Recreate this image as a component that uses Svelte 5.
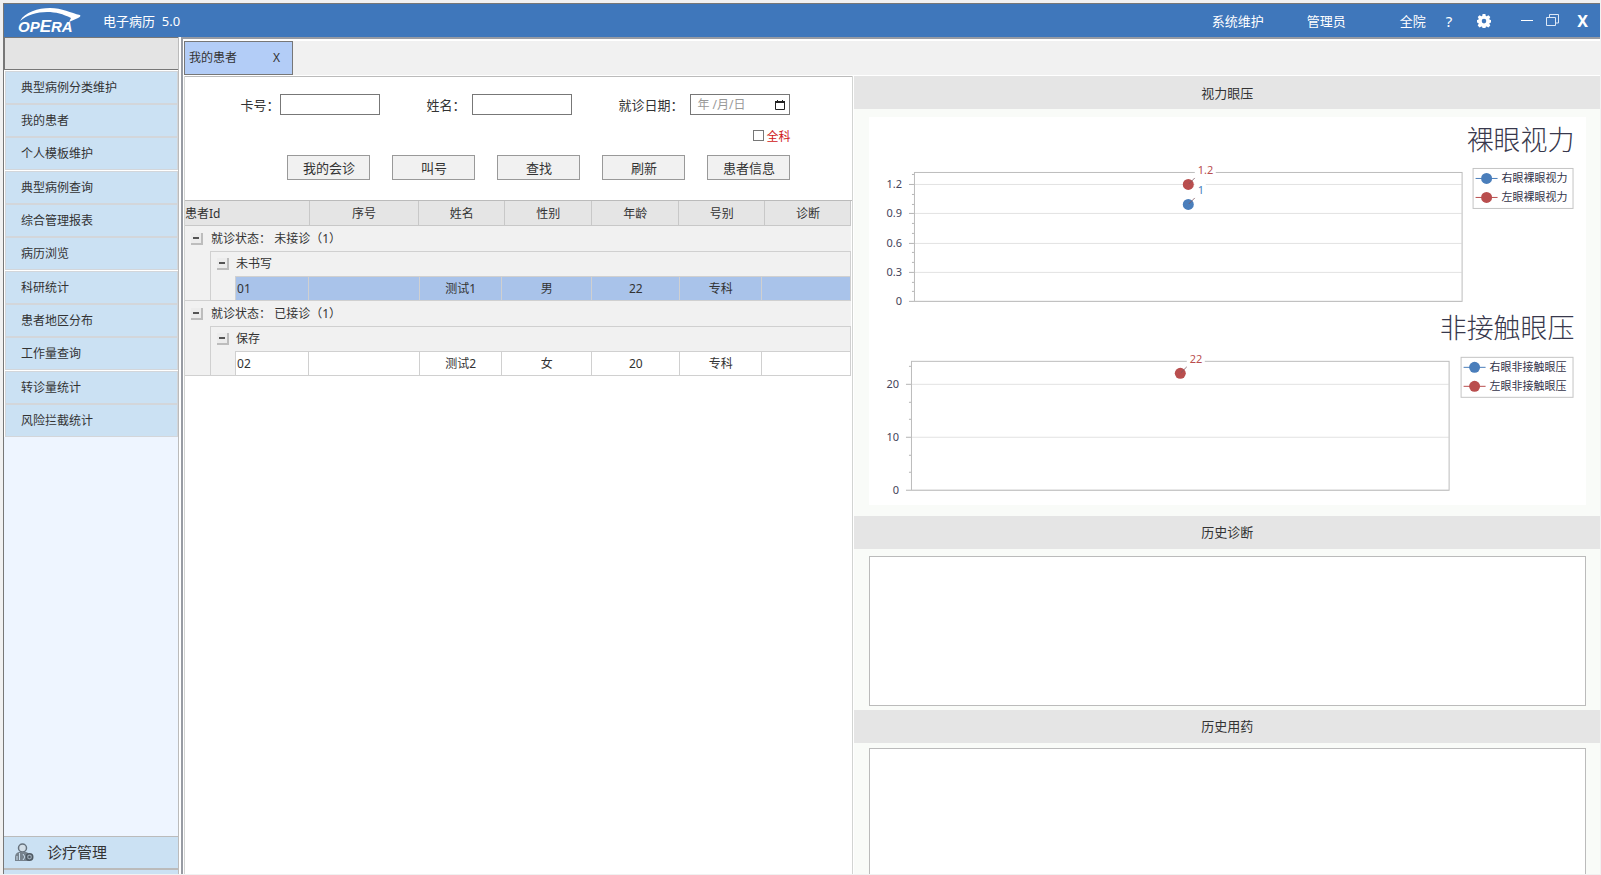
<script>
  const menu = [
    '典型病例分类维护', '我的患者', '个人模板维护', '典型病例查询', '综合管理报表', '病历浏览',
    '科研统计', '患者地区分布', '工作量查询', '转诊量统计', '风险拦截统计'
  ];
  const actions = ['我的会诊', '叫号', '查找', '刷新', '患者信息'];
  const headers = [
    { text: '患者Id', width: 125 },
    { text: '序号', width: 109 },
    { text: '姓名', width: 86 },
    { text: '性别', width: 87 },
    { text: '年龄', width: 87 },
    { text: '号别', width: 86 },
    { text: '诊断', width: 86 }
  ];
  const bodyCols = [26, 25, 73, 111, 82, 90, 88, 82, 89];
  const groups = [
    { title: '就诊状态： 未接诊（1）', sub: '未书写', selected: true, cells: ['01', '', '测试1', '男', '22', '专科', ''] },
    { title: '就诊状态： 已接诊（1）', sub: '保存', selected: false, cells: ['02', '', '测试2', '女', '20', '专科', ''] }
  ];
  const charts = [
    {
      title: '裸眼视力', titleY: 33, left: 45, right: 593, top: 55, bottom: 184, step: 29.2,
      ticks: ['0', '0.3', '0.6', '0.9', '1.2'], minors: [9.7, 19.5, 39, 48.7, 68.2, 77.9, 97.4, 107.1, 126.6],
      legend: { x: 604, y: 51, w: 101, rows: ['右眼裸眼视力', '左眼裸眼视力'] },
      points: [
        { x: 319, y: 67, text: '1.2', color: '#b94e4e', w: 21 },
        { x: 319, y: 87, text: '1', color: '#4a7ebb', w: 11 }
      ]
    },
    {
      title: '非接触眼压', titleY: 221, left: 42, right: 580, top: 244, bottom: 373, step: 53,
      ticks: ['0', '10', '20'], minors: [17.7, 35.3, 70.7, 88.3, 124],
      legend: { x: 592, y: 240, w: 113, rows: ['右眼非接触眼压', '左眼非接触眼压'] },
      points: [{ x: 311, y: 256, text: '22', color: '#b94e4e', w: 18 }]
    }
  ];
  const series = ['#4a7ebb', '#b94e4e'];
  let allDepts = $state(false);
</script>

<div class="app">
  <header>
    <svg class="logo" width="66" height="26" viewBox="0 0 66 26" role="img" aria-label="OPERA">
      <path d="M2 13C7 4 20 0 32 0C44 0 53 5 62 7C63 8 62 9 60 10L51 14L53 10C45 6 38 4 29 4C19 4 9 7 2 13Z" fill="#fff" />
      <text x="0" y="24" class="logo-text"><tspan>OP</tspan><tspan class="big">E</tspan><tspan>RA</tspan></text>
    </svg>
    <h1>电子病历&nbsp; 5.0</h1>
    <nav>
      <a href="#maintain" class="maintain">系统维护</a>
      <a href="#admin" class="admin">管理员</a>
      <a href="#hospital" class="scope">全院</a>
      <button class="help" aria-label="帮助">?</button>
      <button class="gear" aria-label="设置">
        <svg width="14" height="14" viewBox="0 0 14 14">
          <path fill="#fff" fill-rule="evenodd" d="M5.6 0h2.8l.4 1.9.9.4 1.7-1.1 1.9 1.9-1 1.7.4.9 1.8.4v2.3l-1.8.5-.4.9 1 1.7-1.9 1.9-1.7-1-.9.4-.4 1.7H5.6l-.4-1.7-.9-.4-1.7 1L.7 11.5l1-1.7-.4-.9L-.3 8.4V6.1l1.6-.4.4-.9-1-1.7L2.6 1.2l1.7 1.1.9-.4ZM7 4.8a2.3 2.3 0 1 0 0 4.6 2.3 2.3 0 0 0 0-4.600Z" />
        </svg>
      </button>
      <button class="min" aria-label="最小化"><svg width="12" height="14"><path d="M0 6.5h12" stroke="#fff" /></svg></button>
      <button class="restore" aria-label="还原">
        <svg width="14" height="13" fill="none" stroke="#dce8f6"><path d="M.5 3.5h9v8h-9Z M3.500 3v-2.500h9v8.500h-3" /></svg>
      </button>
      <button class="close" aria-label="关闭">X</button>
    </nav>
  </header>

  <div class="body">
    <aside>
      <div class="slot"></div>
      <ul>
        {#each menu as item}
          <li><a href="#menu">{item}</a></li>
        {/each}
      </ul>
      <button class="module">
        <svg width="20" height="19" viewBox="0 0 20 19">
          <circle cx="8.5" cy="5" r="4" fill="#d3dfe8" stroke="#66727d" stroke-width="1.5" />
          <path d="M1 18v-4c0-3 2-4.500 4-5h7c2 .5 3.500 2 3.500 4v5Z" fill="#76828d" />
          <path d="M5.500 10v7M9 11l2 3-2 3M3 13v4" stroke="#cbdfef" fill="none" />
          <circle cx="15.5" cy="14" r="3.2" fill="#9eacb8" stroke="#4e5963" stroke-width="1.6" />
          <circle cx="15.5" cy="14" r="1.2" fill="#4e5963" />
        </svg>
        <span>诊疗管理</span>
      </button>
    </aside>

    <main>
      <div class="tabs">
        <div class="tab"><span>我的患者</span><button aria-label="关闭标签">X</button></div>
      </div>
      <div class="panes">
        <section class="patients">
          <form onsubmit={(e) => e.preventDefault()}>
            <div class="fields">
              <div class="field card"><label for="card">卡号：</label><input id="card" type="text" /></div>
              <div class="field name"><label for="name">姓名：</label><input id="name" type="text" /></div>
              <div class="field date">
                <label for="date">就诊日期：</label>
                <div class="datebox">
                  <input id="date" type="text" placeholder="年 /月/日" />
                  <button type="button" aria-label="选择日期">
                    <svg width="10" height="10" fill="none" stroke="#222"><path d="M.5 2.5v7h9v-7" /><path d="M0 2h10" stroke-width="2" /><path d="M2.5 0v1M7.5 0v1" /></svg>
                  </button>
                </div>
              </div>
            </div>
            <label class="check"><input type="checkbox" bind:checked={allDepts} /><span>全科</span></label>
            <div class="actions">
              {#each actions as a}<button type="button">{a}</button>{/each}
            </div>
          </form>
          <div class="grid">
            <table class="head">
              <colgroup>{#each headers as h}<col style="width:{h.width}px" />{/each}</colgroup>
              <thead><tr>{#each headers as h}<th>{h.text}</th>{/each}</tr></thead>
            </table>
            <table class="rows">
              <colgroup>{#each bodyCols as w}<col style="width:{w}px" />{/each}</colgroup>
              <tbody>
                {#each groups as g}
                  <tr class="group">
                    <td class="toggle"><button aria-label="折叠"></button></td>
                    <td colspan="8">{g.title}</td>
                  </tr>
                  <tr class="sub">
                    <td class="indent"></td>
                    <td class="toggle top"><button aria-label="折叠"></button></td>
                    <td class="top end" colspan="7">{g.sub}</td>
                  </tr>
                  <tr class="data" class:selected={g.selected}>
                    <td class="indent"></td>
                    <td class="indent"></td>
                    {#each g.cells as c}<td class="cell">{c}</td>{/each}
                  </tr>
                {/each}
              </tbody>
            </table>
          </div>
        </section>

        <section class="details">
          <h2>视力眼压</h2>
          <div class="charts">
            <svg viewBox="0 0 717 388" role="img" aria-label="视力眼压">
              {#each charts as c}
                <text class="title" x="706" y={c.titleY} text-anchor="end">{c.title}</text>
                {#each c.ticks as t, i}
                  {@const y = Math.round(c.bottom - i * c.step)}
                  <path d="M{c.left} {y + 0.5}H{c.right}" stroke="#e2e2e2" />
                  <path d="M{c.left - 5} {y + 0.5}h5" stroke="#b4b4b4" />
                  <text class="tick" x={c.left - 12} y={y + 4} text-anchor="end">{t}</text>
                {/each}
                {#each c.minors as m}
                  <path d="M{c.left - 2} {Math.round(c.bottom - m) + 0.5}h2" stroke="#b4b4b4" />
                {/each}
                <rect x={c.left + 0.5} y={c.top + 0.5} width={c.right - c.left} height={c.bottom - c.top} fill="none" stroke="#bcbcbc" />
                {#each c.points as p}
                  <rect x={p.x + 7} y={p.y - 20} width={p.w} height="13" fill="#fff" />
                  <circle cx={p.x + 0.5} cy={p.y + 0.5} r="5.5" fill={p.color} />
                  <path d="M{p.x + 1} {p.y}l6-6" stroke="#7c5560" stroke-opacity=".8" />
                  <text class="value" x={p.x + 10} y={p.y - 10} fill={p.color}>{p.text}</text>
                {/each}
                <rect x={c.legend.x + 0.5} y={c.legend.y + 0.5} width={c.legend.w - 1} height="40" fill="#fff" stroke="#c4c4c4" />
                {#each c.legend.rows as r, i}
                  {@const y = c.legend.y + 10.5 + i * 19}
                  <path d="M{c.legend.x + 3} {y}h22" stroke={series[i]} />
                  <circle cx={c.legend.x + 14} cy={y} r="5.5" fill={series[i]} />
                  <text class="key" x={c.legend.x + 29} y={y + 4}>{r}</text>
                {/each}
              {/each}
            </svg>
          </div>
          <h2>历史诊断</h2>
          <textarea class="diagnosis" aria-label="历史诊断"></textarea>
          <h2>历史用药</h2>
          <textarea class="drugs" aria-label="历史用药"></textarea>
        </section>
      </div>
    </main>
  </div>
</div>

<style>
  :global(body) { margin: 0; background: #f1f1f1; }
  .app, .app * { box-sizing: border-box; }
  .app {
    height: 100vh; display: flex; flex-direction: column; overflow: hidden;
    padding: 3px 1px 1px 3px; background: #f1f1f1; color: #333;
    font: 12px/16px "Noto Sans", "Noto Sans CJK SC", sans-serif;
  }
  a { color: inherit; text-decoration: none; }
  button { font: inherit; color: inherit; padding: 0; margin: 0; border: 0; background: none; display: flex; align-items: center; justify-content: center; }
  input, textarea { font: inherit; color: inherit; margin: 0; padding: 0; border-radius: 0; outline: 0; }
  svg { display: block; }

  header {
    flex: none; height: 34px; display: flex; align-items: center; color: #fff; font-size: 13px;
    background: #3f77bb; border-top: 1px solid #777; border-left: 1px solid #777; padding-left: 14px;
  }
  .logo { overflow: visible; }
  .logo-text { font: italic bold 15px "Liberation Sans", sans-serif; fill: #fff; }
  .big { font-size: 17px; }
  h1 { margin: 0 0 0 19px; font-size: 13px; font-weight: 400; }
  nav { margin-left: auto; display: flex; align-items: center; padding-right: 12px; }
  .admin { margin-left: 43px; }
  .scope { margin-left: 54px; }
  .help { margin-left: 20px; font-size: 15px; }
  .gear { margin-left: 25px; }
  .min { margin-left: 30px; }
  .restore { margin-left: 13px; }
  .close { margin-left: 17px; font-size: 16px; font-weight: 700; }

  .body { flex: 1; min-height: 0; display: flex; background: #fff; border-left: 1px solid #777; }
  aside { flex: none; width: 175px; display: flex; flex-direction: column; background: #eef5ff; border-right: 1px solid #bbb; }
  .slot { flex: none; height: 33px; background: #e4e4e4; border: 1px solid #777; border-right: 0; }
  ul { list-style: none; margin: 0; padding: 1px 0 0 1px; background: #fff; }
  li:nth-child(3n) { margin-bottom: 1px; }
  li a { display: flex; align-items: center; height: 33px; padding-left: 15px; background: #cbe1f3; border: 1px solid #d3d6da; }
  .module {
    margin-top: auto; flex: none; height: 38px; align-items: flex-start; justify-content: flex-start; gap: 13px;
    padding: 6px 0 0 10px; font-size: 15px; line-height: 18px; border-top: 1px solid #bbb;
    background: linear-gradient(#cbe1f3 31px, #bbb 31px, #bbb 33px, #cbe1f3 33px);
  }

  main { flex: 1; min-width: 0; display: flex; flex-direction: column; margin-left: 2px; padding-left: 1px; border: solid #979ba3; border-width: 2px 0 0 2px; }
  .tabs { flex: none; margin-top: 2px; height: 34px; background: #f1f1f1; display: flex; }
  .tab { width: 109px; display: flex; align-items: center; justify-content: space-between; padding: 0 12px 0 4px; background: #b3cdf7; border: 1px solid #777; }
  .panes { flex: 1; min-height: 0; margin-top: 1px; display: grid; grid-template-columns: minmax(0, 669fr) minmax(0, 746fr); grid-template-rows: minmax(0, 1fr); }

  .patients { border: 1px solid #d2d4d2; border-width: 0 1px; }
  form { height: 125px; border-top: 1px solid #bbb; border-bottom: 1px solid #bbb; padding: 17px 62px 0 0; display: flex; flex-direction: column; align-items: flex-end; }
  .fields { display: flex; gap: 46px; font-size: 13px; }
  .field { display: flex; align-items: center; justify-content: space-between; height: 21px; }
  .card { width: 140px; }
  .name { width: 146px; }
  .date { width: 172px; }
  label { white-space: nowrap; }
  .field > input, .datebox { width: 100px; height: 21px; border: 1px solid #777; background: #fff; }
  .datebox { display: flex; align-items: center; padding: 0 4px 0 6px; font-size: 12px; }
  .datebox input { flex: 1; min-width: 0; border: 0; background: none; }
  .datebox input::placeholder { color: #999; opacity: 1; }
  .check { display: flex; align-items: center; gap: 2px; margin-top: 14px; height: 16px; color: #d02020; }
  .check input { appearance: none; width: 11px; height: 11px; border: 1px solid #777; background: #fff; margin-bottom: 4px; }
  .actions { display: flex; gap: 22px; margin-top: 10px; font-size: 13px; }
  .actions button { width: 83px; height: 25px; background: #f1f1f1; border: 1px solid #999; }

  .grid { padding-right: 1px; }
  table { width: 100%; table-layout: fixed; border-collapse: separate; border-spacing: 0; }
  th, td { height: 25px; padding: 0; text-align: center; border: 0; white-space: nowrap; }
  th { background: #e5e5e5; font-weight: 400; padding-top: 2px; border-right: 1px solid #c8c8c8; border-bottom: 1px solid #c8c8c8; }
  th:first-child { text-align: left; }
  td { background: #f1f1f1; text-align: left; }
  .toggle button { width: 12px; height: 12px; margin-left: 6px; background: #ececec; border: solid #bdbdbd; border-width: 0 2px 2px 0; }
  .toggle button::before { content: ""; width: 6px; height: 2px; background: #555; }
  .top { border-top: 1px solid #d0d0d0; }
  .end { border-right: 1px solid #d0d0d0; }
  .indent { border-right: 1px solid #d0d0d0; }
  .data td { border-bottom: 1px solid #d0d0d0; }
  .cell { background: #fff; border-top: 1px solid #d0d0d0; border-right: 1px solid #d0d0d0; text-align: center; }
  .indent + .cell { text-align: left; padding-left: 1px; }
  .selected .cell { background: #a9c3ea; }

  .details { display: flex; flex-direction: column; background: #f9fbf8; border-left: 1px solid #fff; overflow: hidden; }
  h2 { flex: none; margin: 0; height: 33px; display: flex; align-items: center; justify-content: center; background: #e5e5e5; font-size: 13px; font-weight: 400; }
  .charts { flex: none; margin: 8px 14px 11px 15px; background: #fff; }
  .charts svg { width: 100%; height: auto; }
  .title { font: 300 27px "Noto Sans CJK SC", sans-serif; fill: #38384c; }
  .tick, .value { font: 11px "Noto Sans", sans-serif; }
  .tick { fill: #44445a; }
  .key { font: 11px "Noto Sans CJK SC", sans-serif; fill: #33334a; }
  textarea { flex: none; height: 150px; margin: 7px 14px 4px 15px; background: #fff; border: 1px solid #bbb; resize: none; }
  .drugs { flex: 1; margin-top: 5px; margin-bottom: 0; border-bottom: 0; }
</style>
